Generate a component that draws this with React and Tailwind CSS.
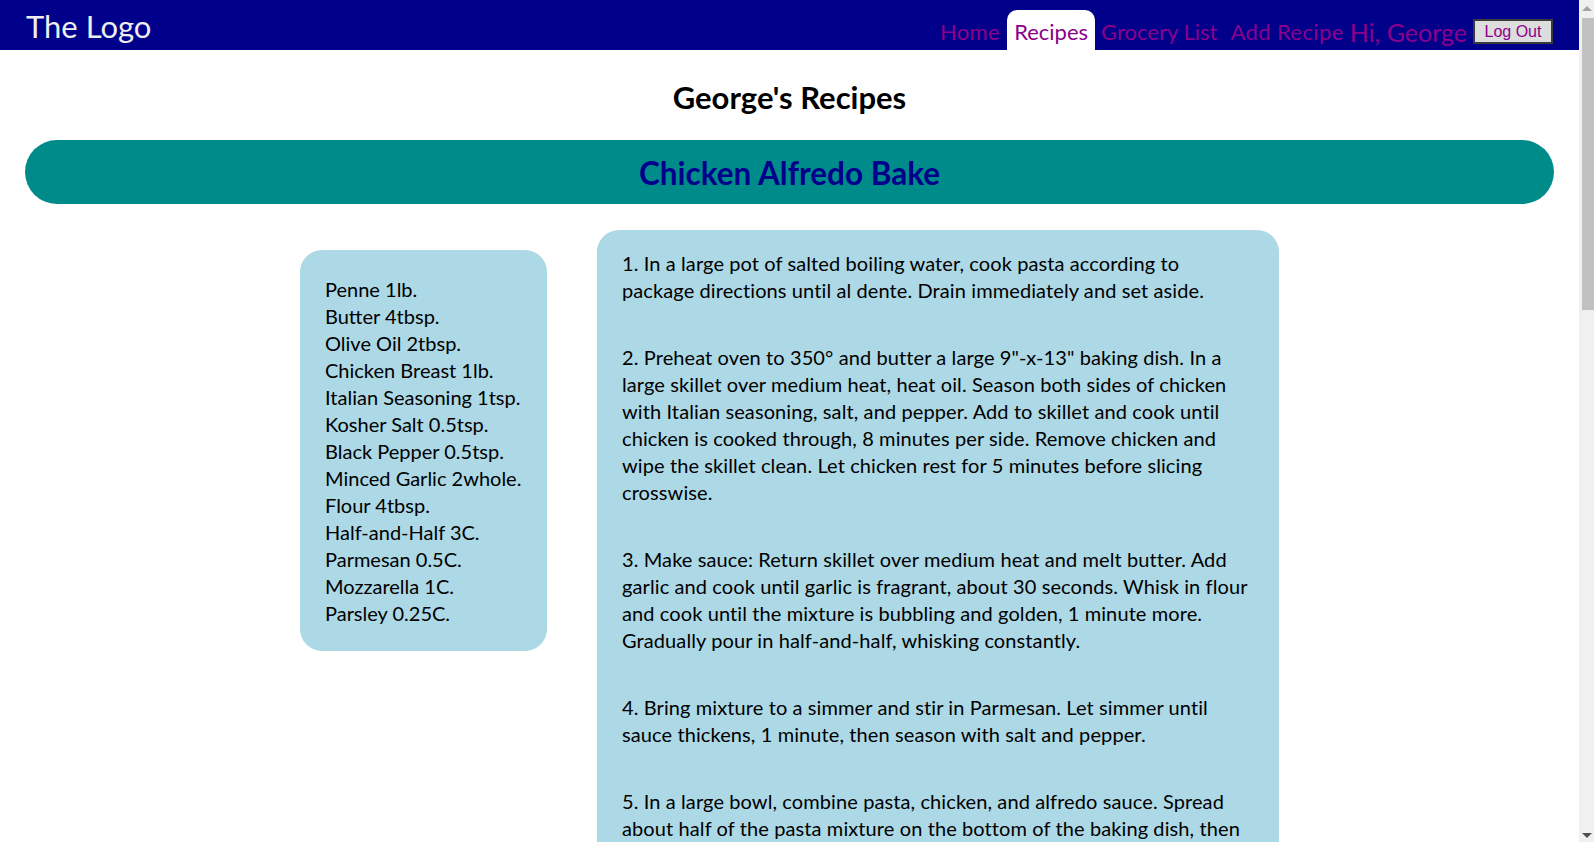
import React from "react";

const ingredients = [
  "Penne 1lb.",
  "Butter 4tbsp.",
  "Olive Oil 2tbsp.",
  "Chicken Breast 1lb.",
  "Italian Seasoning 1tsp.",
  "Kosher Salt 0.5tsp.",
  "Black Pepper 0.5tsp.",
  "Minced Garlic 2whole.",
  "Flour 4tbsp.",
  "Half-and-Half 3C.",
  "Parmesan 0.5C.",
  "Mozzarella 1C.",
  "Parsley 0.25C.",
];

const steps = [
  "1. In a large pot of salted boiling water, cook pasta according to package directions until al dente. Drain immediately and set aside.",
  "2. Preheat oven to 350° and butter a large 9\"-x-13\" baking dish. In a large skillet over medium heat, heat oil. Season both sides of chicken with Italian seasoning, salt, and pepper. Add to skillet and cook until chicken is cooked through, 8 minutes per side. Remove chicken and wipe the skillet clean. Let chicken rest for 5 minutes before slicing crosswise.",
  "3. Make sauce: Return skillet over medium heat and melt butter. Add garlic and cook until garlic is fragrant, about 30 seconds. Whisk in flour and cook until the mixture is bubbling and golden, 1 minute more. Gradually pour in half-and-half, whisking constantly.",
  "4. Bring mixture to a simmer and stir in Parmesan. Let simmer until sauce thickens, 1 minute, then season with salt and pepper.",
  "5. In a large bowl, combine pasta, chicken, and alfredo sauce. Spread about half of the pasta mixture on the bottom of the baking dish, then top with half of the mozzarella. Top with remaining pasta mixture and remaining mozzarella.",
  "6. Bake until cheese is melty and golden, 20 to 25 minutes. Garnish with parsley and serve.",
];

function NavBar() {
  return (
    <div className="flex h-[50px] items-end justify-between bg-[#00008b] pl-[26px] pr-[26px]">
      <div className="self-center pt-[1px] text-[31px] leading-[40px] text-[#eeeeee]">The Logo</div>
      <div className="flex items-end text-[22px] leading-[34px] text-[#8b008b]">
        <a className="px-[7px] pb-[1px] tracking-[0.4px]">Home</a>
        <a className="rounded-t-[10px] bg-white px-[7px] pb-[1px] pt-[5px]">Recipes</a>
        <a className="px-[6px] pb-[1px]">Grocery List</a>
        <a className="pl-[7px] pr-[6px] pb-[1px] tracking-[0.4px]">Add Recipe</a>
        <span className="pr-[6px] text-[25px] leading-[36px]">Hi, George</span>
        <button className="mb-[6px] h-[25px] w-[80px] border-2 border-[#3a3a3a] bg-[#dddddd] font-['Liberation_Sans',sans-serif] text-[16px] leading-[18px] text-[#8b008b]">
          Log Out
        </button>
      </div>
    </div>
  );
}

function ScrollBar() {
  return (
    <div className="sticky top-0 flex h-[842px] w-[15px] shrink-0 flex-col items-center bg-[#f0f0f0]">
      <div className="mt-[6px] h-0 w-0 border-x-[5px] border-b-[5px] border-x-transparent border-b-[#a3a3a3]" />
      <div className="ml-[2px] mt-[7px] h-[292px] w-[12px] bg-[#c1c1c1]" />
      <div className="flex-1" />
      <div className="mb-[4px] h-0 w-0 border-x-[5px] border-t-[5px] border-x-transparent border-t-[#505050]" />
    </div>
  );
}

export default function App() {
  return (
    <div className="flex min-h-screen bg-white font-['Lato',sans-serif] text-black">
      <div className="w-[1579px] shrink-0">
        <NavBar />

        <h2 className="mt-[25px] text-center text-[31px] font-bold leading-[44px]">George's Recipes</h2>

        <div className="mx-[25px] mt-[21px] flex h-[64px] items-center justify-center rounded-[32px] bg-[#008b8b] pt-[3px]">
          <h1 className="text-[31.5px] font-bold text-[#00008b]">Chicken Alfredo Bake</h1>
        </div>

        <div className="mt-[25px] flex items-start justify-center gap-[50px] pb-10">
          <div className="mt-[21px] w-[247px] whitespace-nowrap rounded-[22px] bg-[#add8e6] px-[25px] pb-[24px] pt-[26px] text-[20px] leading-[27px]">
            {ingredients.map((item) => (
              <div key={item}>{item}</div>
            ))}
          </div>

          <div className="mt-[1px] w-[682px] rounded-[22px] bg-[#add8e6] pb-[20px] pl-[25px] pr-[27px] pt-[20px] text-[20px] leading-[27px] tracking-[0.1px]">
            {steps.map((s, i) => (
              <p key={i} className={i === 0 ? "" : "mt-[40px]"}>
                {s}
              </p>
            ))}
          </div>
        </div>
      </div>
      <ScrollBar />
    </div>
  );
}
